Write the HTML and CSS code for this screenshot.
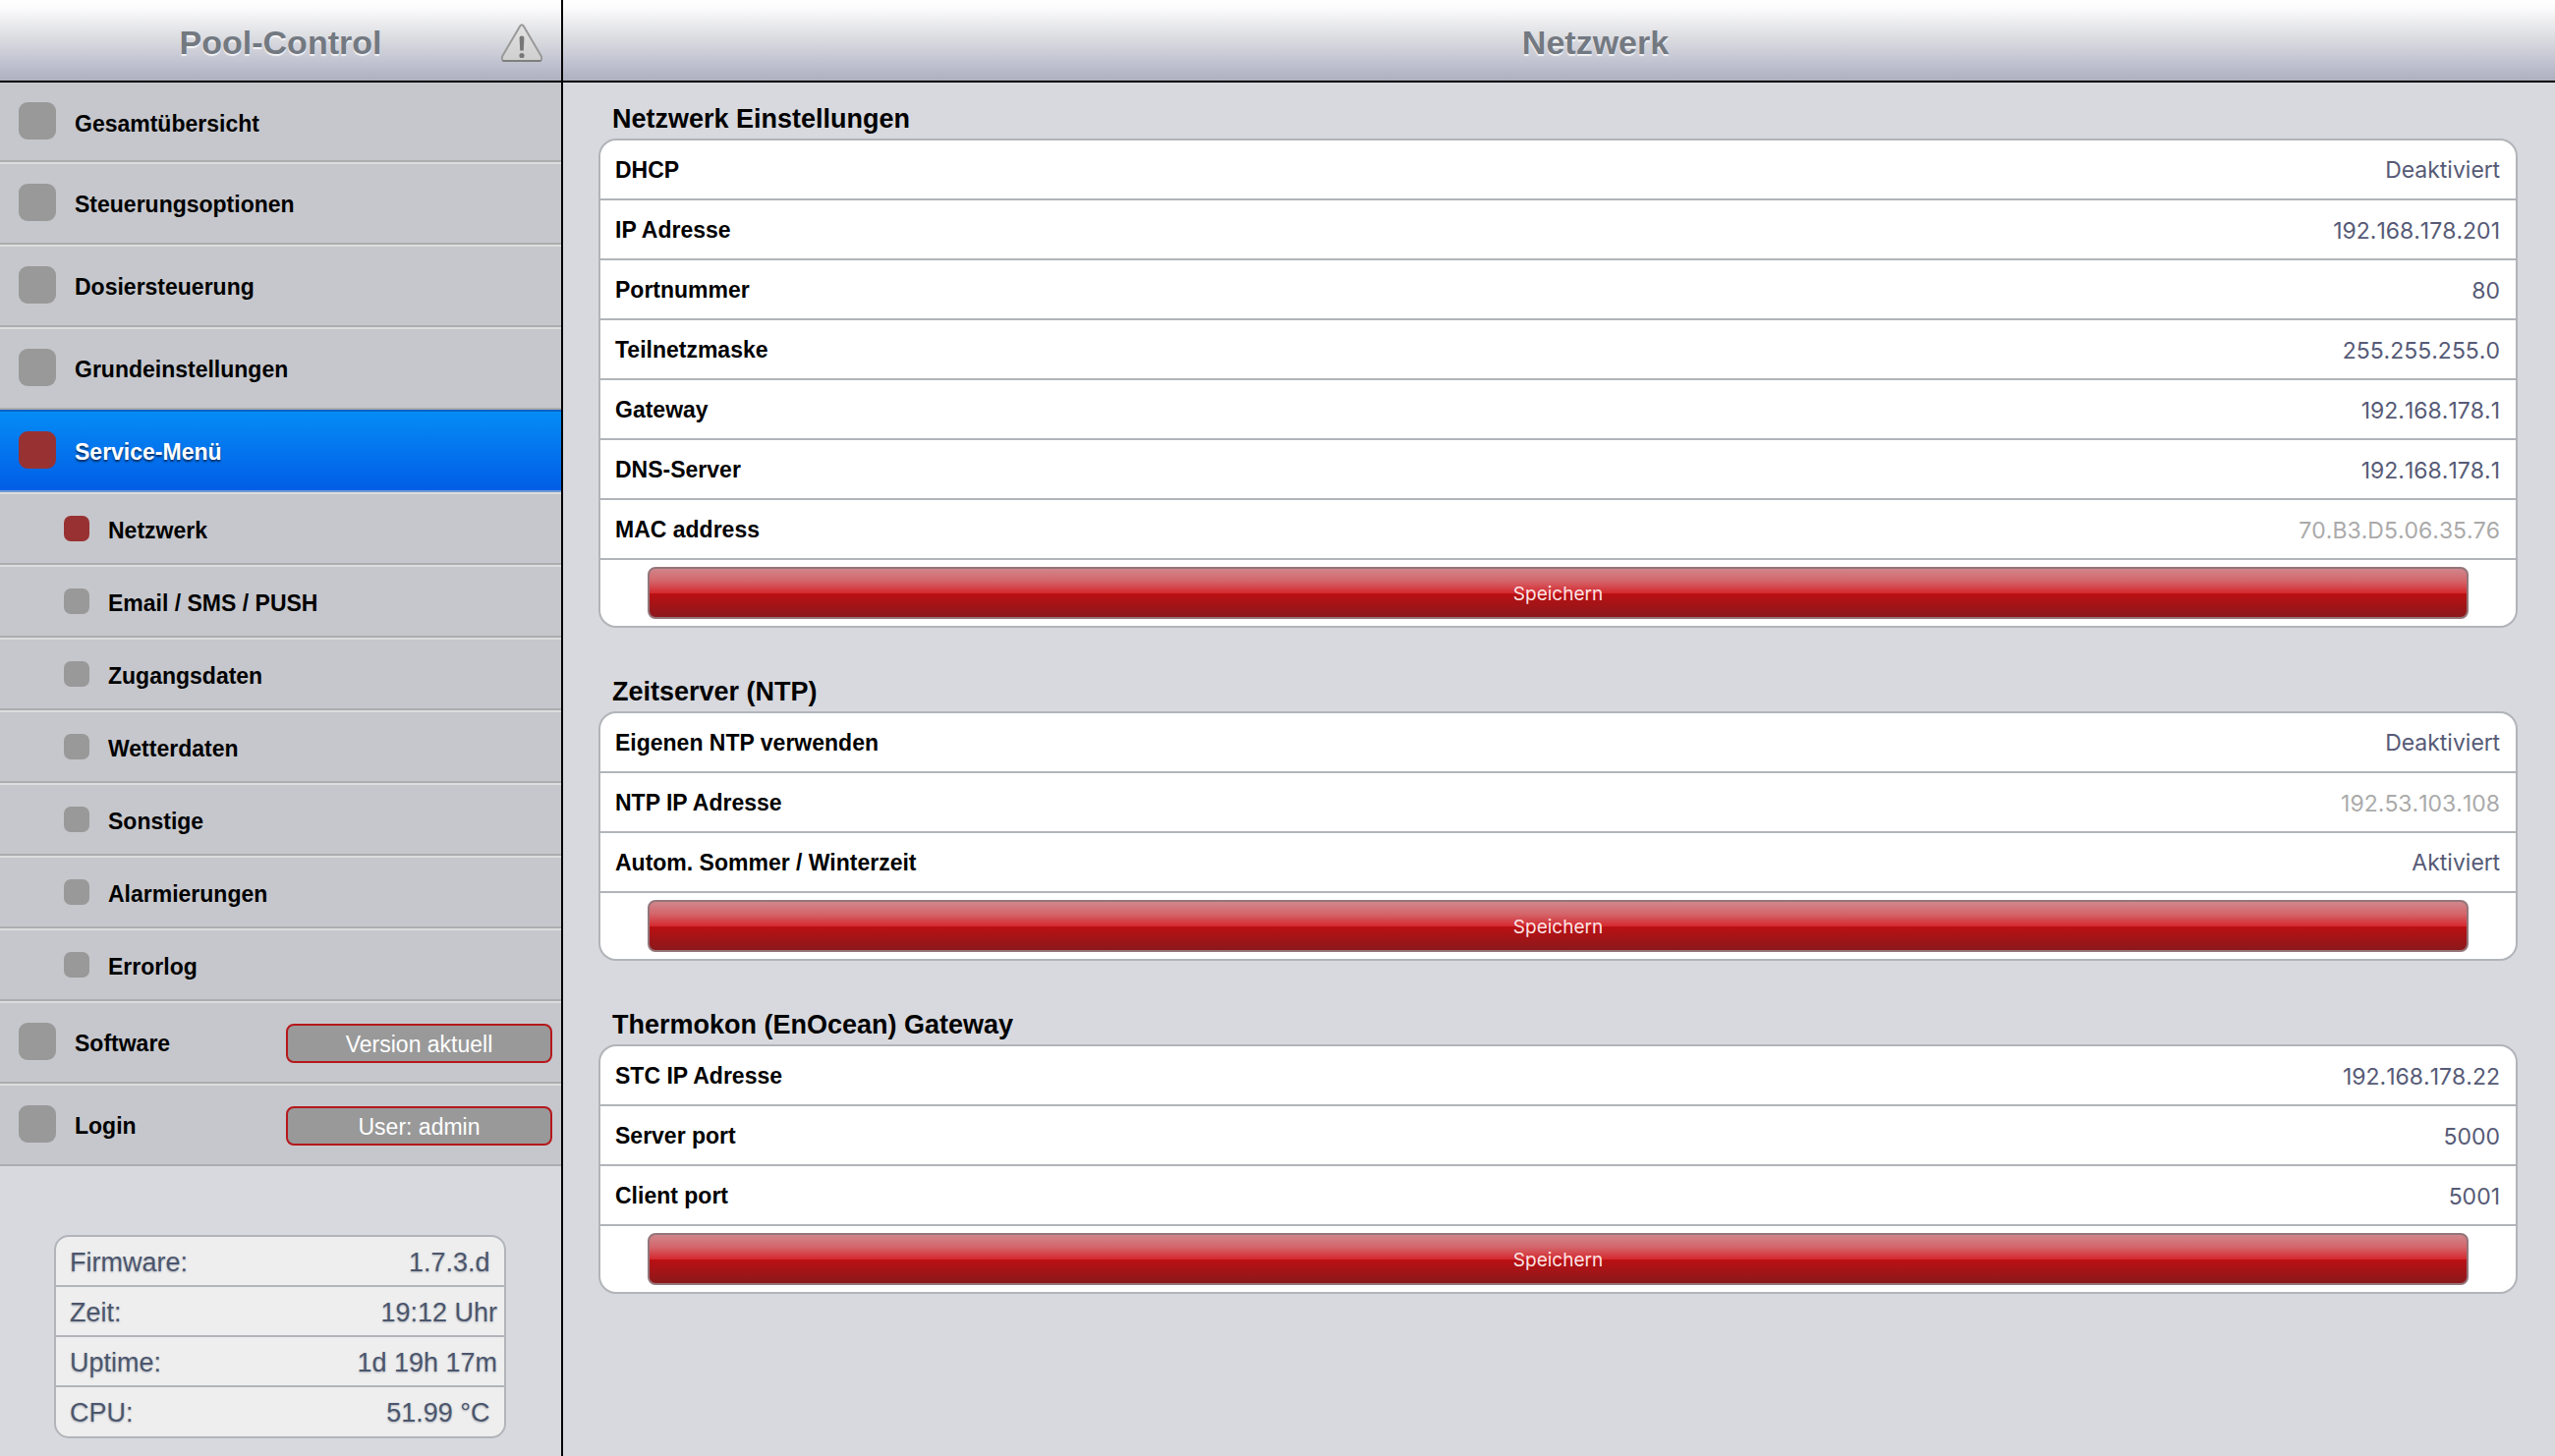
FILE: index.html
```html
<!DOCTYPE html>
<html lang="de">
<head>
<meta charset="utf-8">
<meta name="viewport" content="width=device-width, initial-scale=1">
<title>Pool-Control</title>
<link rel="stylesheet" href="styles.css">
</head>
<body>
<div class="app">
  <aside class="sidebar">
    <header class="bar">
      <h1 class="bar-title">Pool-Control</h1>
      <a class="bar-alert" href="#alarm" aria-label="Alarmierungen">
        <svg width="44" height="40" viewBox="0 0 44 40" aria-hidden="true">
          <defs>
            <linearGradient id="sign" x1="0" y1="0" x2="0" y2="1">
              <stop offset="0" stop-color="#e2e2e2"/>
              <stop offset="1" stop-color="#cfcfcf"/>
            </linearGradient>
          </defs>
          <path d="M20.200 2.600Q22 0 23.800 2.600L42 33.500Q42.600 38 40.500 38H3.500Q1.400 38 2 33.500Z" fill="url(#sign)" stroke="#999" stroke-width="2"/>
          <path d="M2.500 38H41.500" stroke="#777" stroke-width="1.500"/>
          <path d="M19.600 14.500Q19.600 12.500 22 12.500T24.400 14.500L23.800 27.500H20.200Z" fill="#777"/>
          <circle cx="22" cy="32.500" r="2.600" fill="#777"/>
        </svg>
      </a>
    </header>
    <nav class="menu">
      <a class="item item-first" href="#overview"><span class="dot"></span>Gesamtübersicht</a>
      <a class="item" href="#control"><span class="dot"></span>Steuerungsoptionen</a>
      <a class="item" href="#dosing"><span class="dot"></span>Dosiersteuerung</a>
      <a class="item" href="#basic"><span class="dot"></span>Grundeinstellungen</a>
      <a class="item item-active" href="#service"><span class="dot dot-on"></span>Service-Menü</a>
      <a class="item item-sub" href="#network"><span class="dot dot-on"></span>Netzwerk</a>
      <a class="item item-sub" href="#mail"><span class="dot"></span>Email / SMS / PUSH</a>
      <a class="item item-sub" href="#access"><span class="dot"></span>Zugangsdaten</a>
      <a class="item item-sub" href="#weather"><span class="dot"></span>Wetterdaten</a>
      <a class="item item-sub" href="#other"><span class="dot"></span>Sonstige</a>
      <a class="item item-sub" href="#alarms"><span class="dot"></span>Alarmierungen</a>
      <a class="item item-sub" href="#errors"><span class="dot"></span>Errorlog</a>
      <a class="item" href="#software"><span class="dot"></span>Software<span class="pill">Version aktuell</span></a>
      <a class="item" href="#login"><span class="dot"></span>Login<span class="pill">User: admin</span></a>
    </nav>
    <table class="info">
      <tbody>
        <tr><th scope="row">Firmware:</th><td>1.7.3.d&nbsp;</td></tr>
        <tr><th scope="row">Zeit:</th><td>19:12 Uhr</td></tr>
        <tr><th scope="row">Uptime:</th><td>1d 19h 17m</td></tr>
        <tr><th scope="row">CPU:</th><td>51.99 °C&nbsp;</td></tr>
      </tbody>
    </table>
  </aside>
  <main class="main">
    <header class="bar bar-main"><h2 class="bar-title">Netzwerk</h2></header>
    <div class="content">
      <form class="group">
        <h3 class="group-title">Netzwerk Einstellungen</h3>
        <div class="card">
          <div class="row"><label for="dhcp">DHCP</label><select id="dhcp" class="field field-select"><option>Deaktiviert</option><option>Aktiviert</option></select></div>
          <div class="row"><label for="ip">IP Adresse</label><input id="ip" class="field" value="192.168.178.201"></div>
          <div class="row"><label for="port">Portnummer</label><input id="port" class="field" value="80"></div>
          <div class="row"><label for="mask">Teilnetzmaske</label><input id="mask" class="field" value="255.255.255.0"></div>
          <div class="row"><label for="gw">Gateway</label><input id="gw" class="field" value="192.168.178.1"></div>
          <div class="row"><label for="dns">DNS-Server</label><input id="dns" class="field" value="192.168.178.1"></div>
          <div class="row"><label for="mac">MAC address</label><input id="mac" class="field" value="70.B3.D5.06.35.76" disabled></div>
          <div class="actions"><button class="save" type="button">Speichern</button></div>
        </div>
      </form>
      <form class="group">
        <h3 class="group-title">Zeitserver (NTP)</h3>
        <div class="card">
          <div class="row"><label for="ntp">Eigenen NTP verwenden</label><select id="ntp" class="field field-select"><option>Deaktiviert</option><option>Aktiviert</option></select></div>
          <div class="row"><label for="ntpip">NTP IP Adresse</label><input id="ntpip" class="field" value="192.53.103.108" disabled></div>
          <div class="row"><label for="dst">Autom. Sommer / Winterzeit</label><select id="dst" class="field field-select"><option>Aktiviert</option><option>Deaktiviert</option></select></div>
          <div class="actions"><button class="save" type="button">Speichern</button></div>
        </div>
      </form>
      <form class="group">
        <h3 class="group-title">Thermokon (EnOcean) Gateway</h3>
        <div class="card">
          <div class="row"><label for="stc">STC IP Adresse</label><input id="stc" class="field" value="192.168.178.22"></div>
          <div class="row"><label for="sport">Server port</label><input id="sport" class="field" value="5000"></div>
          <div class="row"><label for="cport">Client port</label><input id="cport" class="field" value="5001"></div>
          <div class="actions"><button class="save" type="button">Speichern</button></div>
        </div>
      </form>
    </div>
  </main>
</div>
</body>
</html>
```
FILE: styles.css
```css
* {
  box-sizing: border-box;
}

body {
  margin: 0;
  background: #d8d9de;
  color: #000;
  font-family: "Liberation Sans", Arial, sans-serif;
  font-size: 23px;
}

.app {
  display: grid;
  grid-template-columns: 573px 1fr;
  min-height: 100vh;
}

.sidebar {
  border-right: 2px solid #000;
}

/* Title bars */
.bar {
  position: relative;
  display: flex;
  align-items: center;
  justify-content: center;
  height: 84px;
  padding-top: 4px;
  border-bottom: 2px solid #000;
  background: linear-gradient(#fff 0%, #fbfbfc 10%, #d9dadf 50%, #c0c2d0 78%, #adb0bf 100%);
}

.bar-main {
  padding-left: 74px;
}

.bar-title {
  margin: 0;
  color: #737981;
  font-size: 34px;
  line-height: 40px;
  text-shadow: 0 2px 1px rgba(255, 255, 255, 0.8);
}

.bar-alert {
  position: absolute;
  top: 24px;
  right: 18px;
  line-height: 0;
}

/* Navigation */
.item {
  display: flex;
  align-items: center;
  height: 84px;
  padding: 2px 9px 0 19px;
  border-top: 2px solid #dcdddd;
  border-bottom: 2px solid #acadaf;
  background: #c6c7cc;
  color: #000;
  font-weight: bold;
  line-height: 26px;
  text-decoration: none;
}

.item-first {
  height: 81px;
  padding-top: 4px;
  border-top: 0;
}

.item-sub {
  height: 74px;
  padding-top: 4px;
  padding-left: 65px;
}

.item-active {
  border-top-color: #0c60c4;
  border-bottom-color: #6f9bd6;
  background: linear-gradient(#058cf5, #015de6);
  color: #fff;
  text-shadow: 0 2px 2px rgba(0, 0, 0, 0.6);
}

.dot {
  flex: none;
  width: 38px;
  height: 38px;
  margin: 0 19px 5px 0;
  border-radius: 9px;
  background: #999;
}

.item-sub .dot {
  width: 26px;
  height: 26px;
  border-radius: 7px;
}

.dot-on {
  background: #983232;
}

.pill {
  width: 271px;
  height: 40px;
  margin-left: auto;
  border: 2px solid #b5181c;
  border-radius: 8px;
  background: #999;
  color: #fff;
  font-weight: normal;
  line-height: 38px;
  text-align: center;
}

/* System information */
.info {
  width: calc(100% - 111px);
  margin: 70px 56px 19px 55px;
  border: 2px solid #b1b4b9;
  border-radius: 15px;
  border-spacing: 0;
  background: #eee;
  color: #4c566c;
  font-size: 27px;
  line-height: 31px;
  text-shadow: 0 1px 2px rgba(76, 86, 108, 0.4);
}

.info th,
.info td {
  height: 51px;
  padding: 3px 7px 0 14px;
  border-bottom: 2px solid #b1b4b9;
  font-weight: normal;
  text-align: left;
}

.info td {
  text-align: right;
}

.info tr:last-child th,
.info tr:last-child td {
  height: 50px;
  border-bottom: 0;
}

/* Settings */
.content {
  padding: 22px 38px 40px 36px;
}

.group {
  margin-bottom: 50px;
}

.group-title {
  margin: 0;
  padding: 0 12px 4px 14px;
  font-size: 27px;
  line-height: 31px;
}

.card {
  border: 2px solid #b1b4b9;
  border-radius: 18px;
  background: #fff;
}

.row {
  display: flex;
  align-items: center;
  height: 61px;
  padding: 0 16px 0 15px;
  border-bottom: 2px solid #b1b4b9;
}

.row label {
  flex: none;
  font-weight: bold;
  line-height: 26px;
}

.field {
  flex: 1;
  min-width: 0;
  height: 59px;
  margin: 0;
  padding: 3px 0 0;
  border: 0;
  outline: 0;
  background: transparent;
  color: #565a76;
  font: 23px Inter, sans-serif;
  font-kerning: none;
  text-align: right;
  opacity: 1;
}

.field-select {
  padding-top: 0;
  appearance: none;
  text-align-last: right;
}

.field:disabled {
  color: #aaa;
}

.actions {
  display: flex;
  padding: 7px 48px;
}

.save {
  flex: 1;
  height: 53px;
  padding: 2px 0 0;
  border: 2px solid #94757a;
  border-radius: 8px;
  background: linear-gradient(#d0868b 0%, #d4666b 25%, #d42a30 50%, #bb1013 51%, #8b181b 100%);
  color: #fbe4e4;
  font: 19px Inter, sans-serif;
}
```
